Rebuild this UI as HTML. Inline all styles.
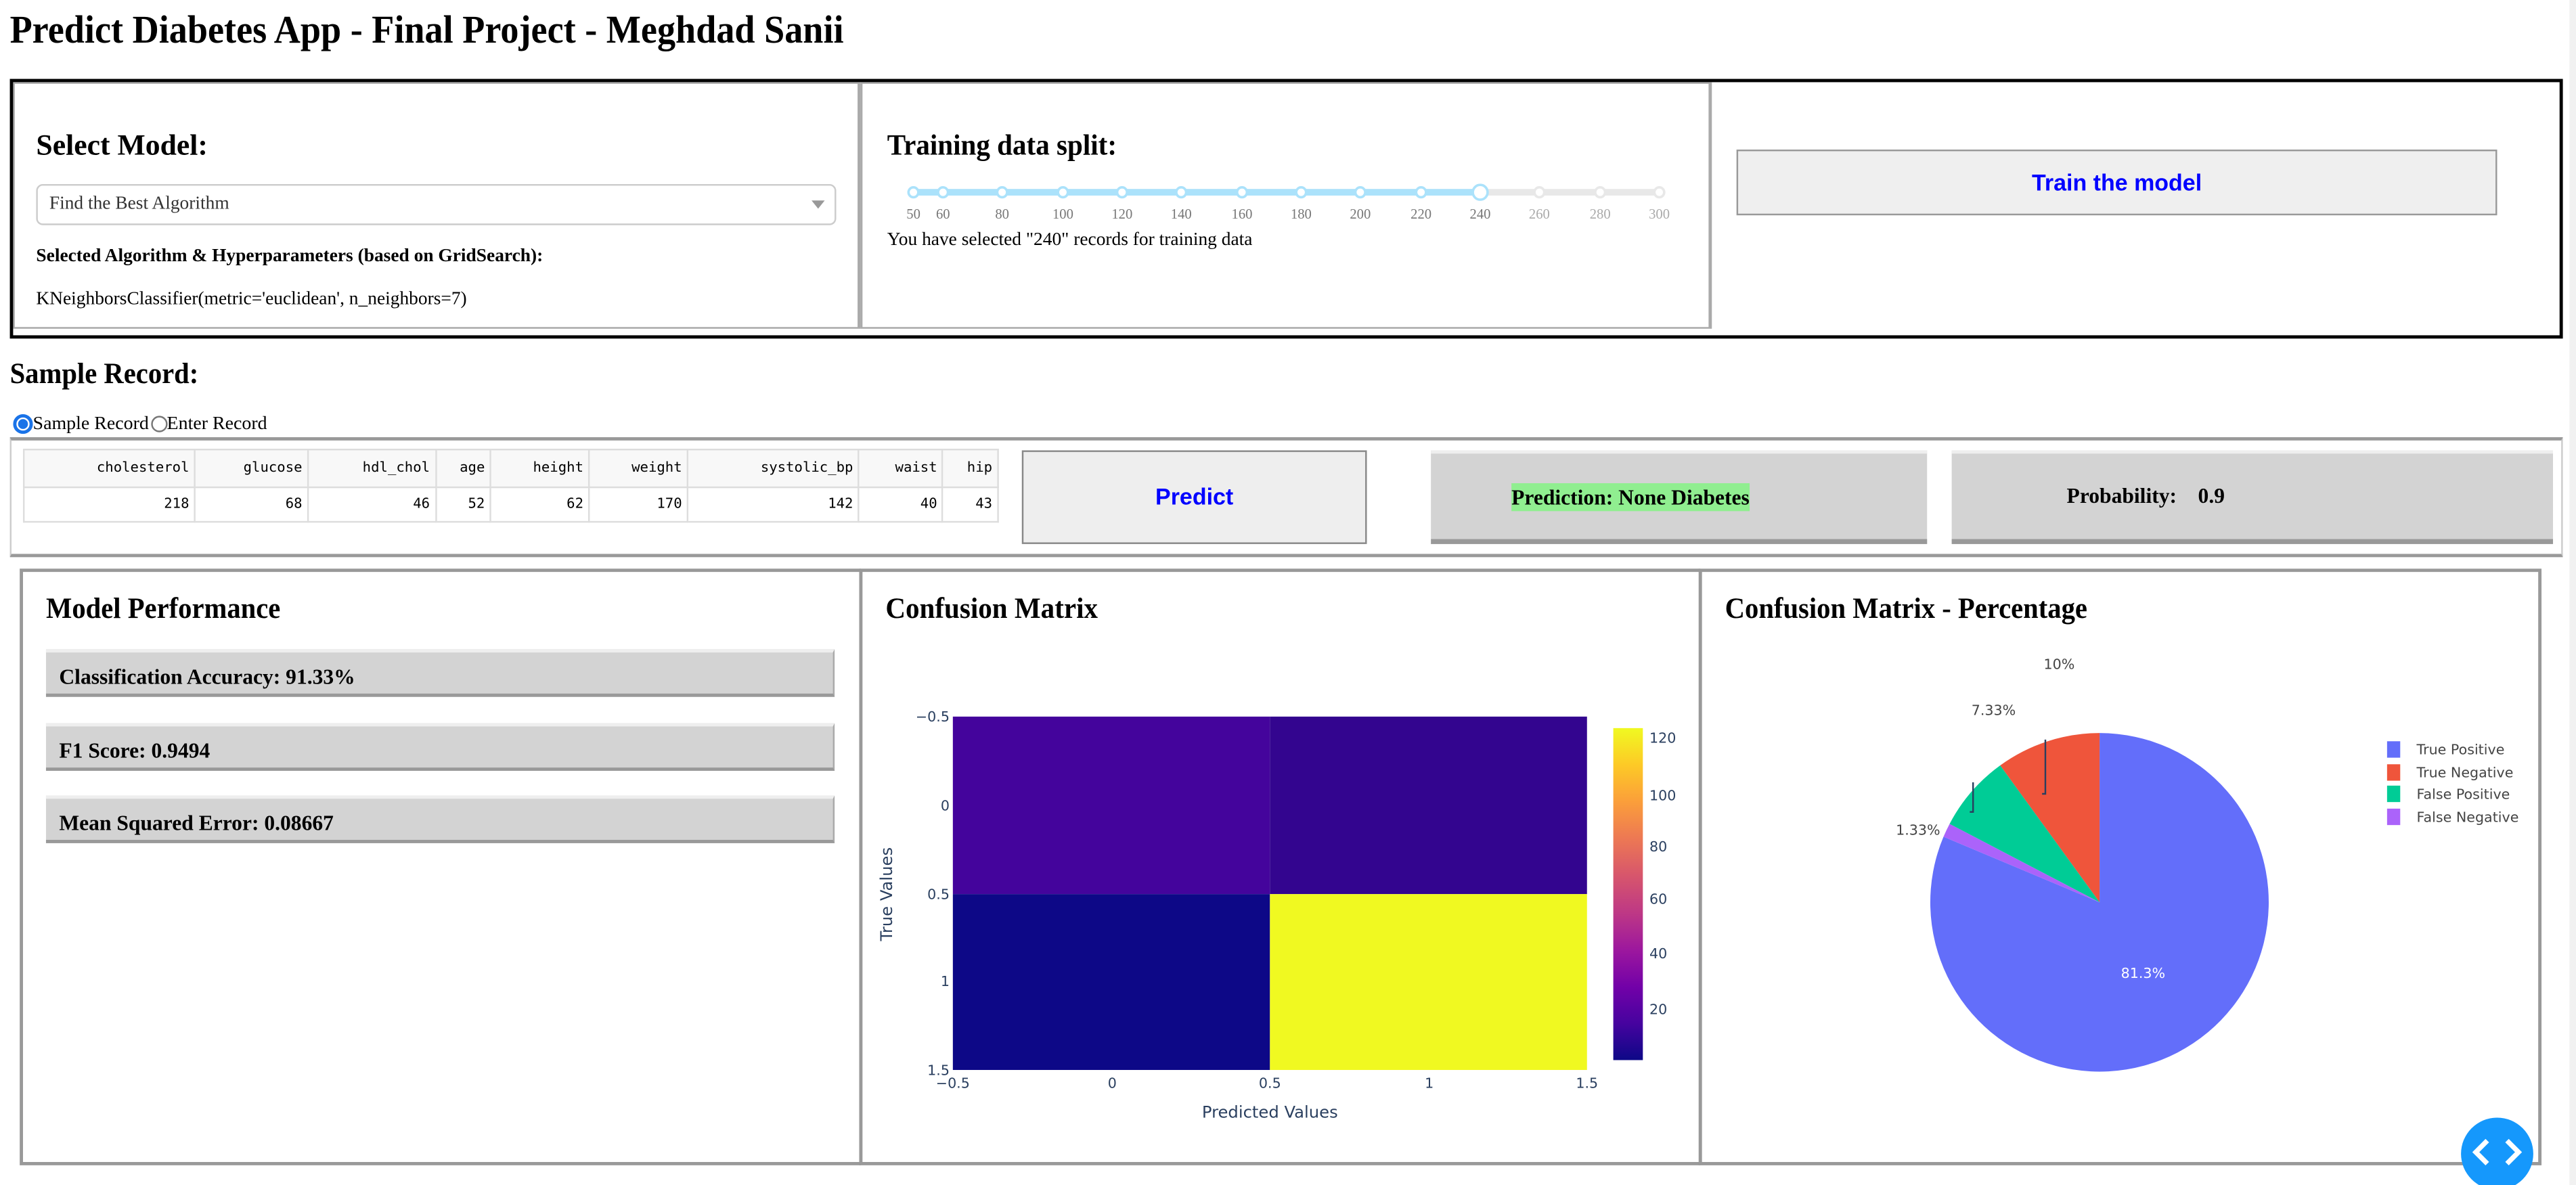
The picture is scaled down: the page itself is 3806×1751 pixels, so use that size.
<!DOCTYPE html>
<html><head><meta charset="utf-8">
<style>
html,body{margin:0;padding:0;background:#fff;overflow:hidden}
body{width:3806px;height:1751px;position:relative}
#w{position:absolute;left:0;top:0;width:1568px;height:721px;transform:scale(2.4273,2.4286);transform-origin:0 0;font-family:"Liberation Serif",serif;color:#000}
.a{position:absolute}
.h{font-weight:bold;font-size:18px;white-space:nowrap;transform-origin:0 0}
.t{font-size:11.3px;white-space:nowrap}
table{border-collapse:collapse;font-family:"DejaVu Sans Mono","Liberation Mono",monospace;font-size:8.5px}
td{border:1px solid #ddd;text-align:right;padding:0 3px;height:20px}
tr.hd td{background:#f8f8f8;height:22px}
.met{position:absolute;left:28px;width:480px;height:29px;background:#d3d3d3;border-top:2px solid #eee;border-bottom:2px solid #999;border-right:1px solid #aaa;font-weight:bold;font-size:13px;line-height:29px;box-sizing:border-box;padding-left:8px}
</style></head><body><div id="w">
<div class="a" style="left:6px;top:6px;font-size:24px;font-weight:bold;white-space:nowrap;transform:scaleX(0.93);transform-origin:0 0">Predict Diabetes App - Final Project - Meghdad Sanii</div>

<div class="a" style="left:6px;top:48px;width:1550px;height:154px;border:2px solid #000"></div>
<div class="a" style="left:8px;top:50px;width:516px;height:150px;border:1px solid #aaa;border-right:2px solid #aaa;box-sizing:border-box"></div>
<div class="a" style="left:524px;top:50px;width:518px;height:150px;border:1px solid #aaa;border-right:2px solid #aaa;box-sizing:border-box"></div>
<div class="a h" style="left:22px;top:78px">Select Model:</div>
<div class="a" style="left:22px;top:112px;width:487px;height:25px;border:1px solid #ccc;border-radius:4px;box-sizing:border-box"></div>
<div class="a t" style="left:30px;top:118px;color:#333">Find the Best Algorithm</div>
<div class="a" style="left:494px;top:122px;width:0;height:0;border-left:4px solid transparent;border-right:4px solid transparent;border-top:5px solid #999"></div>
<div class="a t" style="left:22px;top:150px;font-weight:bold">Selected Algorithm &amp; Hyperparameters (based on GridSearch):</div>
<div class="a t" style="left:22px;top:176px">KNeighborsClassifier(metric='euclidean', n_neighbors=7)</div>

<div class="a h" style="left:540px;top:78px;transform:scaleX(0.94)">Training data split:</div>
<svg class="a" style="left:540px;top:105px" width="490" height="32" viewBox="540 105 490 32">
<line x1="556" y1="117" x2="1010" y2="117" stroke="#e8e8e8" stroke-width="4"/>
<line x1="556" y1="117" x2="901" y2="117" stroke="#abe2fb" stroke-width="4"/>
<g fill="#fff" stroke-width="1.5">
<circle cx="556" cy="117" r="3" stroke="#abe2fb"/><circle cx="574" cy="117" r="3" stroke="#abe2fb"/><circle cx="610" cy="117" r="3" stroke="#abe2fb"/><circle cx="647" cy="117" r="3" stroke="#abe2fb"/><circle cx="683" cy="117" r="3" stroke="#abe2fb"/><circle cx="719" cy="117" r="3" stroke="#abe2fb"/><circle cx="756" cy="117" r="3" stroke="#abe2fb"/><circle cx="792" cy="117" r="3" stroke="#abe2fb"/><circle cx="828" cy="117" r="3" stroke="#abe2fb"/><circle cx="865" cy="117" r="3" stroke="#abe2fb"/>
<circle cx="937" cy="117" r="3" stroke="#e8e8e8"/><circle cx="974" cy="117" r="3" stroke="#e8e8e8"/><circle cx="1010" cy="117" r="3" stroke="#e8e8e8"/>
<circle cx="901" cy="117" r="4.5" stroke="#abe2fb"/></g>
<g font-family="Liberation Serif,serif" font-size="8.5" text-anchor="middle" fill="#777">
<text x="556" y="133">50</text><text x="574" y="133">60</text><text x="610" y="133">80</text><text x="647" y="133">100</text><text x="683" y="133">120</text><text x="719" y="133">140</text><text x="756" y="133">160</text><text x="792" y="133">180</text><text x="828" y="133">200</text><text x="865" y="133">220</text><text x="901" y="133">240</text><text x="937" y="133" fill="#aaa">260</text><text x="974" y="133" fill="#aaa">280</text><text x="1010" y="133" fill="#aaa">300</text></g>
</svg>
<div class="a t" style="left:540px;top:140px">You have selected "240" records for training data</div>

<div class="a" style="left:1057px;top:91px;width:463px;height:40px;background:#efefef;border:1px solid #999;box-sizing:border-box;text-align:center;line-height:38px;color:#00f;font-weight:bold;font-family:'Liberation Sans',sans-serif;font-size:14px">Train the model</div>

<div class="a h" style="left:6px;top:217px;transform:scaleX(0.93)">Sample Record:</div>
<div class="a" style="left:8px;top:252px;display:flex;align-items:center;font-size:11.5px;white-space:nowrap">
<span style="display:inline-block;width:8px;height:8px;border-radius:50%;border:2px solid #1a73e8;background:#fff;position:relative"><span style="position:absolute;left:1px;top:1px;width:6px;height:6px;border-radius:50%;background:#1a73e8"></span></span>Sample Record<span style="display:inline-block;width:8px;height:8px;border-radius:50%;border:1px solid #777;margin-left:1px"></span>Enter Record</div>

<div class="a" style="left:6px;top:266px;width:1554px;height:73px;border:1px solid #ccc;border-top:2px solid #999;border-bottom:2px solid #999;box-sizing:border-box"></div>
<table class="a" style="left:14px;top:273px;width:594px">
<tr class="hd"><td style="width:99px">cholesterol</td><td style="width:63px">glucose</td><td style="width:72px">hdl_chol</td><td style="width:27px">age</td><td style="width:54px">height</td><td style="width:54px">weight</td><td style="width:99px">systolic_bp</td><td style="width:45px">waist</td><td style="width:27px">hip</td></tr>
<tr><td>218</td><td>68</td><td>46</td><td>52</td><td>62</td><td>170</td><td>142</td><td>40</td><td>43</td></tr></table>

<div class="a" style="left:622px;top:274px;width:210px;height:57px;background:#eee;border:1px solid #888;box-sizing:border-box;text-align:center;line-height:55px;color:#00f;font-weight:bold;font-family:'Liberation Sans',sans-serif;font-size:14px">Predict</div>
<div class="a" style="left:871px;top:274px;width:302px;height:57px;background:#d3d3d3;border-top:2px solid #eee;border-bottom:3px solid #999;box-sizing:border-box"></div>
<div class="a" style="left:920px;top:294px;background:#90ee90;font-weight:bold;font-size:13px;line-height:17px;padding:0;white-space:nowrap">Prediction: None Diabetes</div>
<div class="a" style="left:1188px;top:274px;width:366px;height:57px;background:#d3d3d3;border-top:2px solid #eee;border-bottom:3px solid #999;box-sizing:border-box"></div>
<div class="a" style="left:1258px;top:294px;font-weight:bold;font-size:13px;white-space:pre">Probability:    0.9</div>

<div class="a" style="left:12px;top:346px;width:512px;height:363px;border:2px solid #999;border-right:1px solid #999;box-sizing:border-box"></div>
<div class="a" style="left:523px;top:346px;width:512px;height:363px;border:2px solid #999;border-right:1px solid #999;box-sizing:border-box"></div>
<div class="a" style="left:1034px;top:346px;width:513px;height:363px;border:2px solid #999;box-sizing:border-box"></div>

<div class="a h" style="left:28px;top:360px;transform:scaleX(0.93)">Model Performance</div>
<div class="met" style="top:395px">Classification Accuracy: 91.33%</div>
<div class="met" style="top:440px">F1 Score: 0.9494</div>
<div class="met" style="top:484px">Mean Squared Error: 0.08667</div>

<div class="a h" style="left:539px;top:360px;transform:scaleX(0.94)">Confusion Matrix</div>
<div class="a h" style="left:1050px;top:360px;transform:scaleX(0.93)">Confusion Matrix - Percentage</div>

<svg class="a" style="left:0;top:0" width="1568" height="721">
<defs><linearGradient id="pl" x1="0" y1="1" x2="0" y2="0">
<stop offset="0" stop-color="#0d0887"/><stop offset=".11" stop-color="#46039f"/><stop offset=".22" stop-color="#7201a8"/><stop offset=".33" stop-color="#9c179e"/><stop offset=".44" stop-color="#bd3786"/><stop offset=".56" stop-color="#d8576b"/><stop offset=".67" stop-color="#ed7953"/><stop offset=".78" stop-color="#fb9f3a"/><stop offset=".89" stop-color="#fdca26"/><stop offset="1" stop-color="#f0f921"/></linearGradient></defs>
<rect x="580" y="436" width="193" height="108" fill="#44049c"/>
<rect x="773" y="436" width="193" height="108" fill="#33058f"/>
<rect x="580" y="544" width="193" height="107" fill="#0d0887"/>
<rect x="773" y="544" width="193" height="107" fill="#f0f921"/>
<rect x="982" y="443" width="18" height="202" fill="url(#pl)"/>
<g font-family="DejaVu Sans,Liberation Sans,sans-serif" font-size="8.5" fill="#2a3f5f">
<g text-anchor="end"><text x="578" y="439">−0.5</text><text x="578" y="493">0</text><text x="578" y="547">0.5</text><text x="578" y="600">1</text><text x="578" y="654">1.5</text></g>
<g text-anchor="middle"><text x="580" y="662">−0.5</text><text x="677" y="662">0</text><text x="773" y="662">0.5</text><text x="870" y="662">1</text><text x="966" y="662">1.5</text></g>
<text x="773" y="680" text-anchor="middle" font-size="10">Predicted Values</text>
<text x="0" y="0" transform="translate(543,544) rotate(-90)" text-anchor="middle" font-size="10">True Values</text>
<text x="1004" y="452">120</text><text x="1004" y="487">100</text><text x="1004" y="518">80</text><text x="1004" y="550">60</text><text x="1004" y="583">40</text><text x="1004" y="617">20</text>
</g>
<path d="M1278,549 L1183,509.1 A103,103 0 1 0 1278,446 Z" fill="#636efa"/>
<path d="M1278,549 L1278,446 A103,103 0 0 0 1217.5,465.7 Z" fill="#ef553b"/>
<path d="M1278,549 L1217.5,465.7 A103,103 0 0 0 1186.7,501.3 Z" fill="#00cc96"/>
<path d="M1278,549 L1186.7,501.3 A103,103 0 0 0 1183,509.1 Z" fill="#ab63fa"/>
<path d="M1245,450 L1245,483 L1243,483 M1201,476 L1201,494 L1199,494" stroke="#2a3f5f" stroke-width="1" fill="none"/>
<g font-family="DejaVu Sans,Liberation Sans,sans-serif" font-size="8.5" fill="#444">
<text x="1244" y="407">10%</text><text x="1200" y="435">7.33%</text><text x="1154" y="508">1.33%</text>
<text x="1291" y="595" fill="#fff">81.3%</text>
<rect x="1453" y="451" width="8" height="10" fill="#636efa"/><text x="1471" y="459">True Positive</text>
<rect x="1453" y="465" width="8" height="10" fill="#ef553b"/><text x="1471" y="473">True Negative</text>
<rect x="1453" y="478" width="8" height="10" fill="#00cc96"/><text x="1471" y="486">False Positive</text>
<rect x="1453" y="492" width="8" height="10" fill="#ab63fa"/><text x="1471" y="500">False Negative</text>
</g>
<circle cx="1520" cy="702" r="22" fill="#1598fc"/>
<path d="M1514,694 L1507,701 L1514,708 M1526,694 L1533,701 L1526,708" stroke="#fff" stroke-width="3" fill="none"/>
<rect x="1564" y="0" width="4" height="721" fill="#f1f1f1"/>
</svg>
</div></body></html>
